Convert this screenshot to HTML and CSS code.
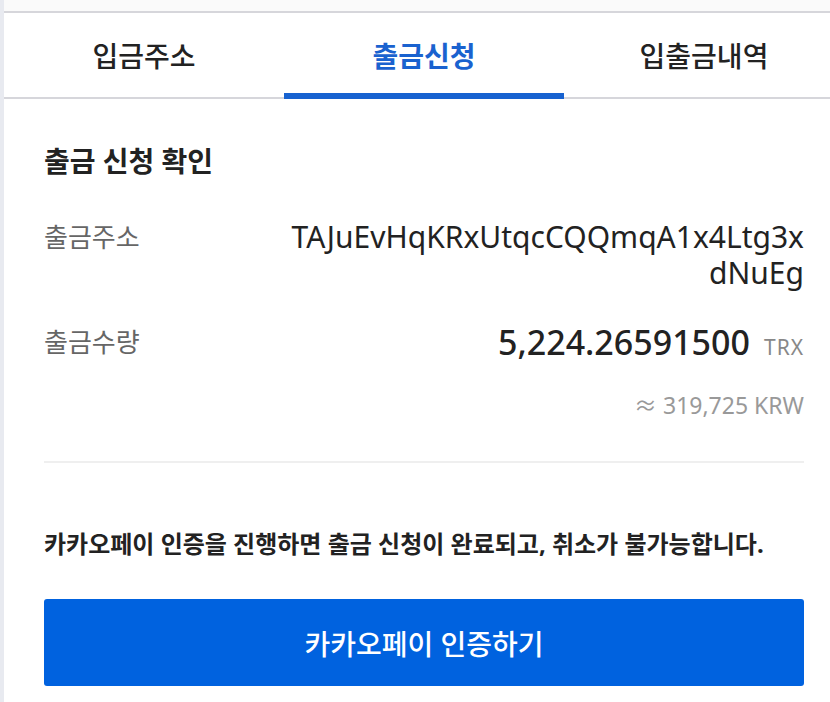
FILE: index.html
```html
<!DOCTYPE html>
<html lang="ko">
<head>
<meta charset="utf-8">
<link rel="stylesheet" href="styles.css">
</head>
<body>
<div class="page">
  <div class="strip"></div>
  <div class="panel">
    <div class="topbar"></div>
    <nav class="tabs">
      <div class="tab">입금주소</div>
      <div class="tab active">출금신청</div>
      <div class="tab">입출금내역</div>
    </nav>
    <section class="content">
      <h2 class="title">출금 신청 확인</h2>
      <div class="row address-row">
        <div class="label">출금주소</div>
        <div class="address">TAJuEvHqKRxUtqcCQQmqA1x4Ltg3x<br>dNuEg</div>
      </div>
      <div class="row amount-row">
        <div class="label">출금수량</div>
        <div class="amount"><span class="num">5,224.26591500</span><span class="unit">TRX</span></div>
      </div>
      <div class="krw">≈ 319,725 KRW</div>
      <div class="divider"></div>
      <p class="notice">카카오페이 인증을 진행하면 출금 신청이 완료되고, 취소가 불가능합니다.</p>
      <button class="btn">카카오페이 인증하기</button>
    </section>
  </div>
</div>
</body>
</html>
```
FILE: styles.css
```css
html, body {
  margin: 0;
  padding: 0;
  background: #fff;
  overflow: hidden;
}
body {
  font-family: "Noto Sans", "Noto Sans CJK KR", sans-serif;
  color: #222;
}
.page {
  display: flex;
  min-height: 702px;
}
.strip {
  width: 4px;
  flex-shrink: 0;
  background: #e8eaf0;
}
.panel {
  width: 840px;
  flex-shrink: 0;
}
.topbar {
  height: 11px;
  background: #fafafa;
  border-bottom: 2px solid #d6d6db;
}
.tabs {
  display: flex;
  height: 84px;
  border-bottom: 2px solid #d6d6db;
}
.tab {
  width: 280px;
  display: flex;
  align-items: center;
  justify-content: center;
  font-size: 28px;
  font-weight: 500;
  color: #222;
  box-sizing: border-box;
}
.tab.active {
  color: #1a62cf;
  font-weight: 700;
  border-bottom: 6px solid #1762d0;
  margin-bottom: -2px;
  padding-top: 4px;
}
.content {
  padding: 0 40px;
}
.title {
  margin: 42px 0 0;
  font-size: 28px;
  font-weight: 700;
  line-height: 40px;
  color: #222;
}
.row {
  display: flex;
  justify-content: space-between;
  align-items: flex-start;
}
.address-row {
  margin-top: 38px;
}
.label {
  font-size: 26px;
  color: #666;
  line-height: 36px;
}
.amount-row .label {
  line-height: 40px;
}
.address {
  font-size: 30px;
  line-height: 36px;
  text-align: right;
  color: #222;
}
.amount-row {
  margin-top: 31px;
}
.amount {
  display: flex;
  align-items: baseline;
  gap: 14px;
}
.num {
  font-size: 34px;
  font-weight: 500;
  line-height: 40px;
  color: #222;
}
.unit {
  font-size: 21px;
  letter-spacing: 1px;
  color: #888;
}
.krw {
  margin-top: 28px;
  text-align: right;
  font-size: 23px;
  color: #999;
  line-height: 30px;
}
.divider {
  margin-top: 41px;
  height: 2px;
  background: #efefef;
}
.notice {
  margin: 64px 0 0;
  font-size: 24px;
  font-weight: 700;
  line-height: 34px;
  color: #222;
}
.btn {
  display: block;
  width: 100%;
  height: 87px;
  margin-top: 38px;
  border: 0;
  border-radius: 3px;
  background: #0062df;
  color: #fff;
  font-family: "Noto Sans", "Noto Sans CJK KR", sans-serif;
  font-size: 28px;
  font-weight: 500;
}
```
